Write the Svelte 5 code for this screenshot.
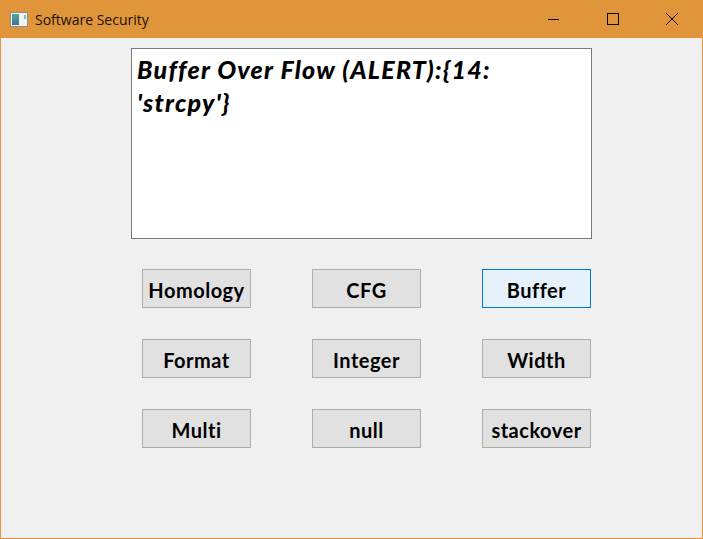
<script lang="ts">
  let message = "Buffer Over Flow (ALERT):{14: 'strcpy'}";
  const buttons = ["Homology", "CFG", "Buffer", "Format", "Integer", "Width", "Multi", "null", "stackover"];
  let hovered = $state("Buffer");
</script>

<div class="window">
  <header class="titlebar">
    <svg class="app-icon" width="18" height="15" viewBox="0 0 18 15">
      <defs>
        <linearGradient id="pane" x1="0" y1="0" x2="0" y2="1">
          <stop offset="0" stop-color="#5aa58c" />
          <stop offset="1" stop-color="#3a7396" />
        </linearGradient>
      </defs>
      <rect x="0.5" y="0.5" width="17" height="14" fill="#eef3f2" stroke="#8c8c8c" />
      <rect x="2" y="2" width="7" height="11" fill="url(#pane)" />
      <rect x="14" y="3" width="2" height="4" fill="#7fbdb4" />
    </svg>
    <span class="title">Software Security</span>
    <div class="controls">
      <span class="control">
        <svg width="12" height="12" viewBox="0 0 12 12"><path d="M0 6.5H11" stroke="#000" fill="none" /></svg>
      </span>
      <span class="control">
        <svg width="12" height="12" viewBox="0 0 12 12"><rect x="0.5" y="0.5" width="11" height="11" stroke="#000" fill="none" /></svg>
      </span>
      <span class="control">
        <svg width="12" height="12" viewBox="0 0 12 12"><path d="M0 0L12 12M12 0L0 12" stroke="#000" fill="none" /></svg>
      </span>
    </div>
  </header>

  <main class="content">
    <div class="output">{message}</div>
    <div class="grid">
      {#each buttons as name}
        <button type="button" class="btn" class:hover={hovered === name}>{name}</button>
      {/each}
    </div>
  </main>
</div>

<style>
  :global(body) {
    margin: 0;
  }
  .window {
    width: 703px;
    height: 539px;
    box-sizing: border-box;
    display: flex;
    flex-direction: column;
    background: #f0f0f0;
    border: 1px solid #e0953a;
    border-top: none;
    overflow: hidden;
  }
  .titlebar {
    height: 38px;
    flex: none;
    display: flex;
    align-items: center;
    background: #e0953a;
    padding-left: 9px;
    box-sizing: border-box;
  }
  .app-icon {
    margin-right: 7px;
  }
  .title {
    font-family: "Open Sans", "Noto Sans", sans-serif;
    font-size: 14px;
    color: #1a1208;
  }
  .controls {
    margin-left: auto;
    margin-right: 1px;
    display: flex;
  }
  .control {
    width: 59px;
    height: 38px;
    display: flex;
    align-items: center;
    justify-content: center;
  }
  .control svg {
    display: block;
  }
  .content {
    display: flex;
    flex-direction: column;
    padding: 10px 0 0 130px;
  }
  .output {
    width: 461px;
    height: 191px;
    box-sizing: border-box;
    background: #fff;
    border: 1px solid #7a7a7a;
    padding: 4px 5px;
    font-family: "Comic Sans MS", Lato, sans-serif;
    font-weight: 900;
    font-style: italic;
    font-size: 25px;
    line-height: 33px;
    letter-spacing: 1.25px;
    color: #000;
  }
  .grid {
    display: grid;
    grid-template-columns: repeat(3, 109px);
    grid-auto-rows: 39px;
    column-gap: 61px;
    row-gap: 31px;
    margin: 30px 0 0 11px;
  }
  .btn {
    box-sizing: border-box;
    padding: 2px 0 0;
    background: #e1e1e1;
    border: 1px solid #adadad;
    font-family: "Comic Sans MS", Lato, sans-serif;
    font-weight: 700;
    font-size: 20px;
    letter-spacing: 0.5px;
    color: #000;
  }
  .btn.hover {
    background: #e5f1fb;
    border-color: #0078d7;
  }
</style>
